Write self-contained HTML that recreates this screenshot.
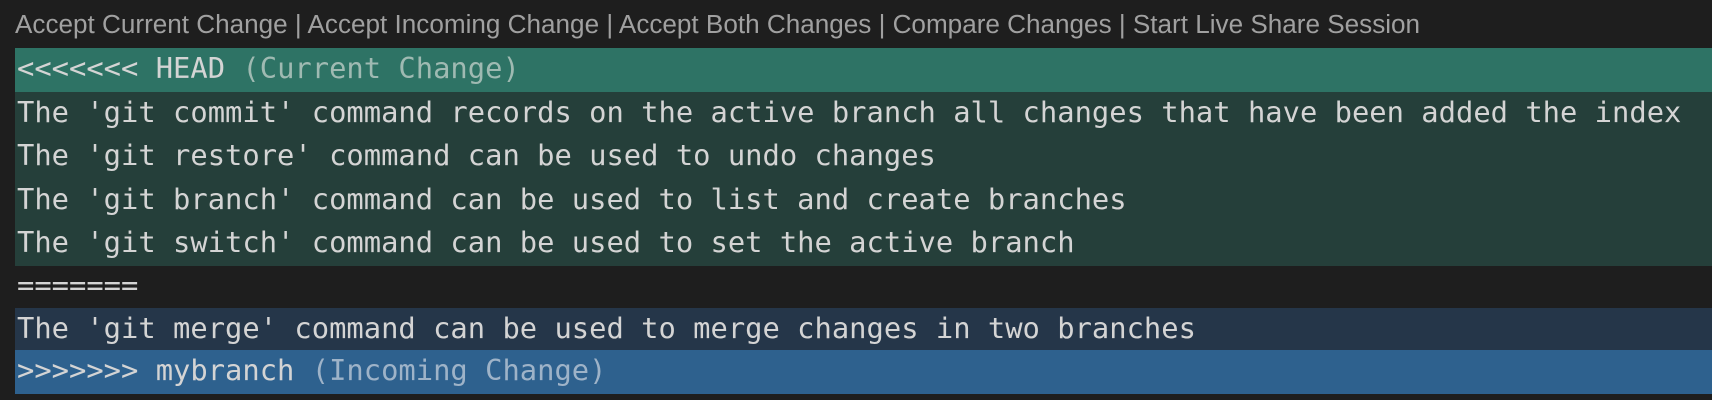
<!DOCTYPE html>
<html><head><style>
body{margin:0;width:1712px;height:400px;background:#1e1e1e;overflow:hidden;}
.top{position:absolute;left:15px;top:9px;font:26.1px "Liberation Sans",sans-serif;color:#a0a0a0;white-space:nowrap;}
.row{position:absolute;left:15px;right:0;height:44px;font:28.8px "DejaVu Sans Mono",monospace;color:#d4d4d4;line-height:40px;white-space:pre;padding-left:2px;overflow:hidden;}
.g{color:#9fbab2}.b{color:#9eb3c8}
</style></head><body>
<div class="top">Accept Current Change | Accept Incoming Change | Accept Both Changes | Compare Changes | Start Live Share Session</div>
<div class="row" style="top:48px;background:#2e7365">&lt;&lt;&lt;&lt;&lt;&lt;&lt; HEAD <span class="g">(Current Change)</span></div>
<div class="row" style="top:92px;height:174px;background:#253f3a"></div>
<div class="row" style="top:92px">The 'git commit' command records on the active branch all changes that have been added the index</div>
<div class="row" style="top:135px">The 'git restore' command can be used to undo changes</div>
<div class="row" style="top:179px">The 'git branch' command can be used to list and create branches</div>
<div class="row" style="top:222px">The 'git switch' command can be used to set the active branch</div>
<div class="row" style="top:265px">=======</div>
<div class="row" style="top:308px;height:42px;background:#253649">The 'git merge' command can be used to merge changes in two branches</div>
<div class="row" style="top:350px;background:#2e618e">&gt;&gt;&gt;&gt;&gt;&gt;&gt; mybranch <span class="b">(Incoming Change)</span></div>
</body></html>
